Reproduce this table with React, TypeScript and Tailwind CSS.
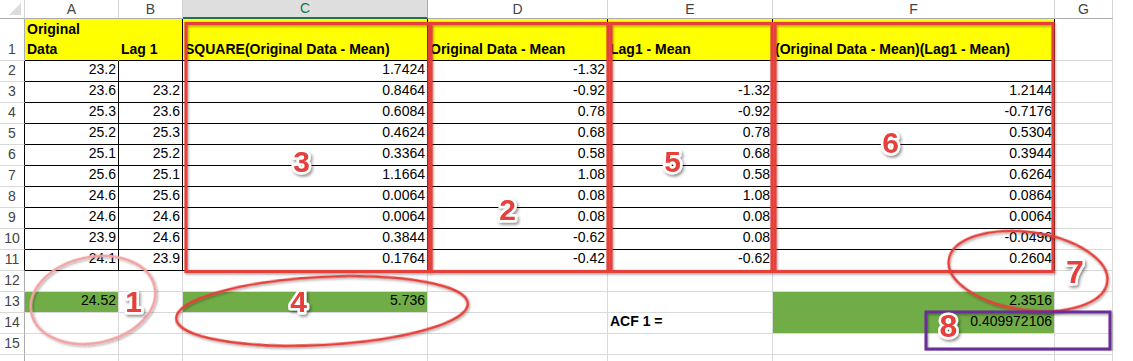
import React from 'react';

// Excel-like sheet with annotation overlay (ACF 1 walkthrough)

type Cell = { v?: string; bold?: boolean; left?: boolean; fill?: 'y' | 'g' };

const COL_LETTERS = ['A', 'B', 'C', 'D', 'E', 'F', 'G'];

const n = (v: string): Cell => ({ v });
const e: Cell = {};
const g = (v: string): Cell => ({ v, fill: 'g' });

const ROWS: Cell[][] = [
  [
    { v: 'Original\nData', bold: true, left: true, fill: 'y' },
    { v: 'Lag 1', bold: true, left: true, fill: 'y' },
    { v: 'SQUARE(Original Data - Mean)', bold: true, left: true, fill: 'y' },
    { v: 'Original Data - Mean', bold: true, left: true, fill: 'y' },
    { v: 'Lag1 - Mean', bold: true, left: true, fill: 'y' },
    { v: '(Original Data - Mean)(Lag1 - Mean)', bold: true, left: true, fill: 'y' },
    e,
  ],
  [n('23.2'), e, n('1.7424'), n('-1.32'), e, e, e],
  [n('23.6'), n('23.2'), n('0.8464'), n('-0.92'), n('-1.32'), n('1.2144'), e],
  [n('25.3'), n('23.6'), n('0.6084'), n('0.78'), n('-0.92'), n('-0.7176'), e],
  [n('25.2'), n('25.3'), n('0.4624'), n('0.68'), n('0.78'), n('0.5304'), e],
  [n('25.1'), n('25.2'), n('0.3364'), n('0.58'), n('0.68'), n('0.3944'), e],
  [n('25.6'), n('25.1'), n('1.1664'), n('1.08'), n('0.58'), n('0.6264'), e],
  [n('24.6'), n('25.6'), n('0.0064'), n('0.08'), n('1.08'), n('0.0864'), e],
  [n('24.6'), n('24.6'), n('0.0064'), n('0.08'), n('0.08'), n('0.0064'), e],
  [n('23.9'), n('24.6'), n('0.3844'), n('-0.62'), n('0.08'), n('-0.0496'), e],
  [n('24.1'), n('23.9'), n('0.1764'), n('-0.42'), n('-0.62'), n('0.2604'), e],
  [e, e, e, e, e, e, e],
  [g('24.52'), e, g('5.736'), e, e, g('2.3516'), e],
  [e, e, e, e, { v: 'ACF 1 =', bold: true, left: true }, g('0.409972106'), e],
  [e, e, e, e, e, e, e],
  [e, e, e, e, e, e, e],
];

function cellClass(r: number, c: number, cell: Cell): string {
  const inTable = r >= 2 && r <= 11 && c <= 5;
  let right = 'border-r-[#d9d9d9]';
  let bottom = 'border-b-[#d9d9d9]';
  let bg = 'bg-white';
  if (r === 1 && c <= 5) {
    bg = 'bg-[#ffff00]';
    right = c === 0 ? 'border-r-[#ffff00]' : 'border-r-black';
    bottom = 'border-b-black';
  }
  if (inTable) {
    right = 'border-r-black';
    bottom = 'border-b-black';
  }
  if (cell.fill === 'g') {
    bg = 'bg-[#70ad47]';
    const below = ROWS[r]?.[c];
    if (below?.fill === 'g') bottom = 'border-b-[#70ad47]';
  }
  return `${bg} ${right} ${bottom}`;
}

function RedBox({ x, w }: { x: number; w: number }) {
  return (
    <rect x={x} y={23.5} width={w} height={248} fill="none" stroke="#e5413a" strokeWidth={3.2} filter="url(#shadow)" />
  );
}

function Tag({ x, y, t, size = 30 }: { x: number; y: number; t: string; size?: number }) {
  return (
    <text
      x={x}
      y={y}
      textAnchor="middle"
      fontFamily="'Liberation Sans', Arial, sans-serif"
      fontWeight={700}
      fontSize={size}
      fill="#e5413a"
      stroke="#ffffff"
      strokeWidth={5}
      strokeLinejoin="round"
      paintOrder="stroke"
      filter="url(#shadow2)"
    >
      {t}
    </text>
  );
}

export default function App() {
  return (
    <div className="relative w-[1133px] h-[361px] overflow-hidden bg-white font-['Liberation_Sans',Arial,sans-serif] text-[14px] text-black">
      <div className="grid grid-cols-[25px_94px_64px_245px_180px_165px_282px_58px_1fr] grid-rows-[19px_42px_repeat(15,21px)]">
        {/* corner */}
        <div className="relative border-r border-b border-r-[#d4d4d4] border-b-[#ababab] bg-white">
          <svg className="absolute right-[3px] bottom-[3px]" width="12" height="12" viewBox="0 0 12 12">
            <polygon points="12,0 12,12 0,12" fill="#dcdcdc" />
          </svg>
        </div>
        {COL_LETTERS.map((l) =>
          l === 'C' ? (
            <div
              key={l}
              className="flex items-center justify-center border-r border-r-[#ababab] border-b-2 border-b-[#217346] bg-[#dedede] text-[14px] text-[#217346]"
            >
              {l}
            </div>
          ) : (
            <div
              key={l}
              className="flex items-center justify-center border-r border-b border-r-[#d4d4d4] border-b-[#ababab] bg-white text-[14px] text-[#444]"
            >
              {l}
            </div>
          ),
        )}
        <div className="bg-white" />

        {ROWS.map((row, ri) => {
          const r = ri + 1;
          const rowHeadBorder = r >= 2 && r <= 11 ? 'border-r-black' : 'border-r-[#ababab]';
          return (
            <React.Fragment key={r}>
              <div
                className={`flex items-end justify-center pb-[2px] border-r border-b border-b-[#d9d9d9] ${rowHeadBorder} bg-white text-[14px] leading-[17px] text-[#444]`}
              >
                {r <= 15 ? r : ''}
              </div>
              {row.map((cell, c) => (
                <div
                  key={c}
                  className={`flex items-end overflow-visible whitespace-pre border-r border-b px-[2px] ${
                    r === 1 ? 'leading-[20px] pb-[1px]' : 'leading-[19px] pb-[2px]'
                  } ${cell.left ? 'justify-start' : 'justify-end'} ${cell.bold ? 'font-bold' : ''} ${cellClass(
                    r,
                    c,
                    cell,
                  )}`}
                >
                  {cell.v}
                </div>
              ))}
              <div className="bg-white" />
            </React.Fragment>
          );
        })}
      </div>

      {/* annotation layer */}
      <svg className="pointer-events-none absolute left-0 top-0" width="1133" height="361" viewBox="0 0 1133 361">
        <defs>
          <filter id="shadow" x="-5%" y="-5%" width="110%" height="110%">
            <feDropShadow dx="1" dy="1.5" stdDeviation="1" floodColor="#000" floodOpacity="0.35" />
          </filter>
          <filter id="shadow2" x="-30%" y="-30%" width="160%" height="160%">
            <feDropShadow dx="1.5" dy="2" stdDeviation="1.5" floodColor="#000" floodOpacity="0.45" />
          </filter>
        </defs>
        <RedBox x={186} w={243} />
        <RedBox x={431} w={177} />
        <RedBox x={611} w={161} />
        <RedBox x={775} w={278} />

        <ellipse cx={93} cy={300} rx={63} ry={43} transform="rotate(-12 93 300)" fill="none" stroke="#f2a3a3" strokeWidth={2.5} filter="url(#shadow)" />
        <ellipse cx={322} cy={311} rx={146} ry={34} transform="rotate(-3 322 311)" fill="none" stroke="#e5413a" strokeWidth={2.5} filter="url(#shadow)" />
        <ellipse cx={1028} cy={271} rx={80} ry={39} transform="rotate(8 1028 271)" fill="none" stroke="#e5413a" strokeWidth={2.5} filter="url(#shadow)" />
        <rect x={926} y={312} width={184} height={37} fill="none" stroke="#6a2f9a" strokeWidth={3} filter="url(#shadow)" />

        <Tag x={133.5} y={312} t="1" />
        <Tag x={507.5} y={220} t="2" />
        <Tag x={301.5} y={172} t="3" />
        <Tag x={298.5} y={312} t="4" />
        <Tag x={672.5} y={172} t="5" />
        <Tag x={890.5} y={153} t="6" />
        <Tag x={1075} y={283} t="7" size={32} />
        <Tag x={948.5} y={337} t="8" size={32} />
      </svg>
    </div>
  );
}
